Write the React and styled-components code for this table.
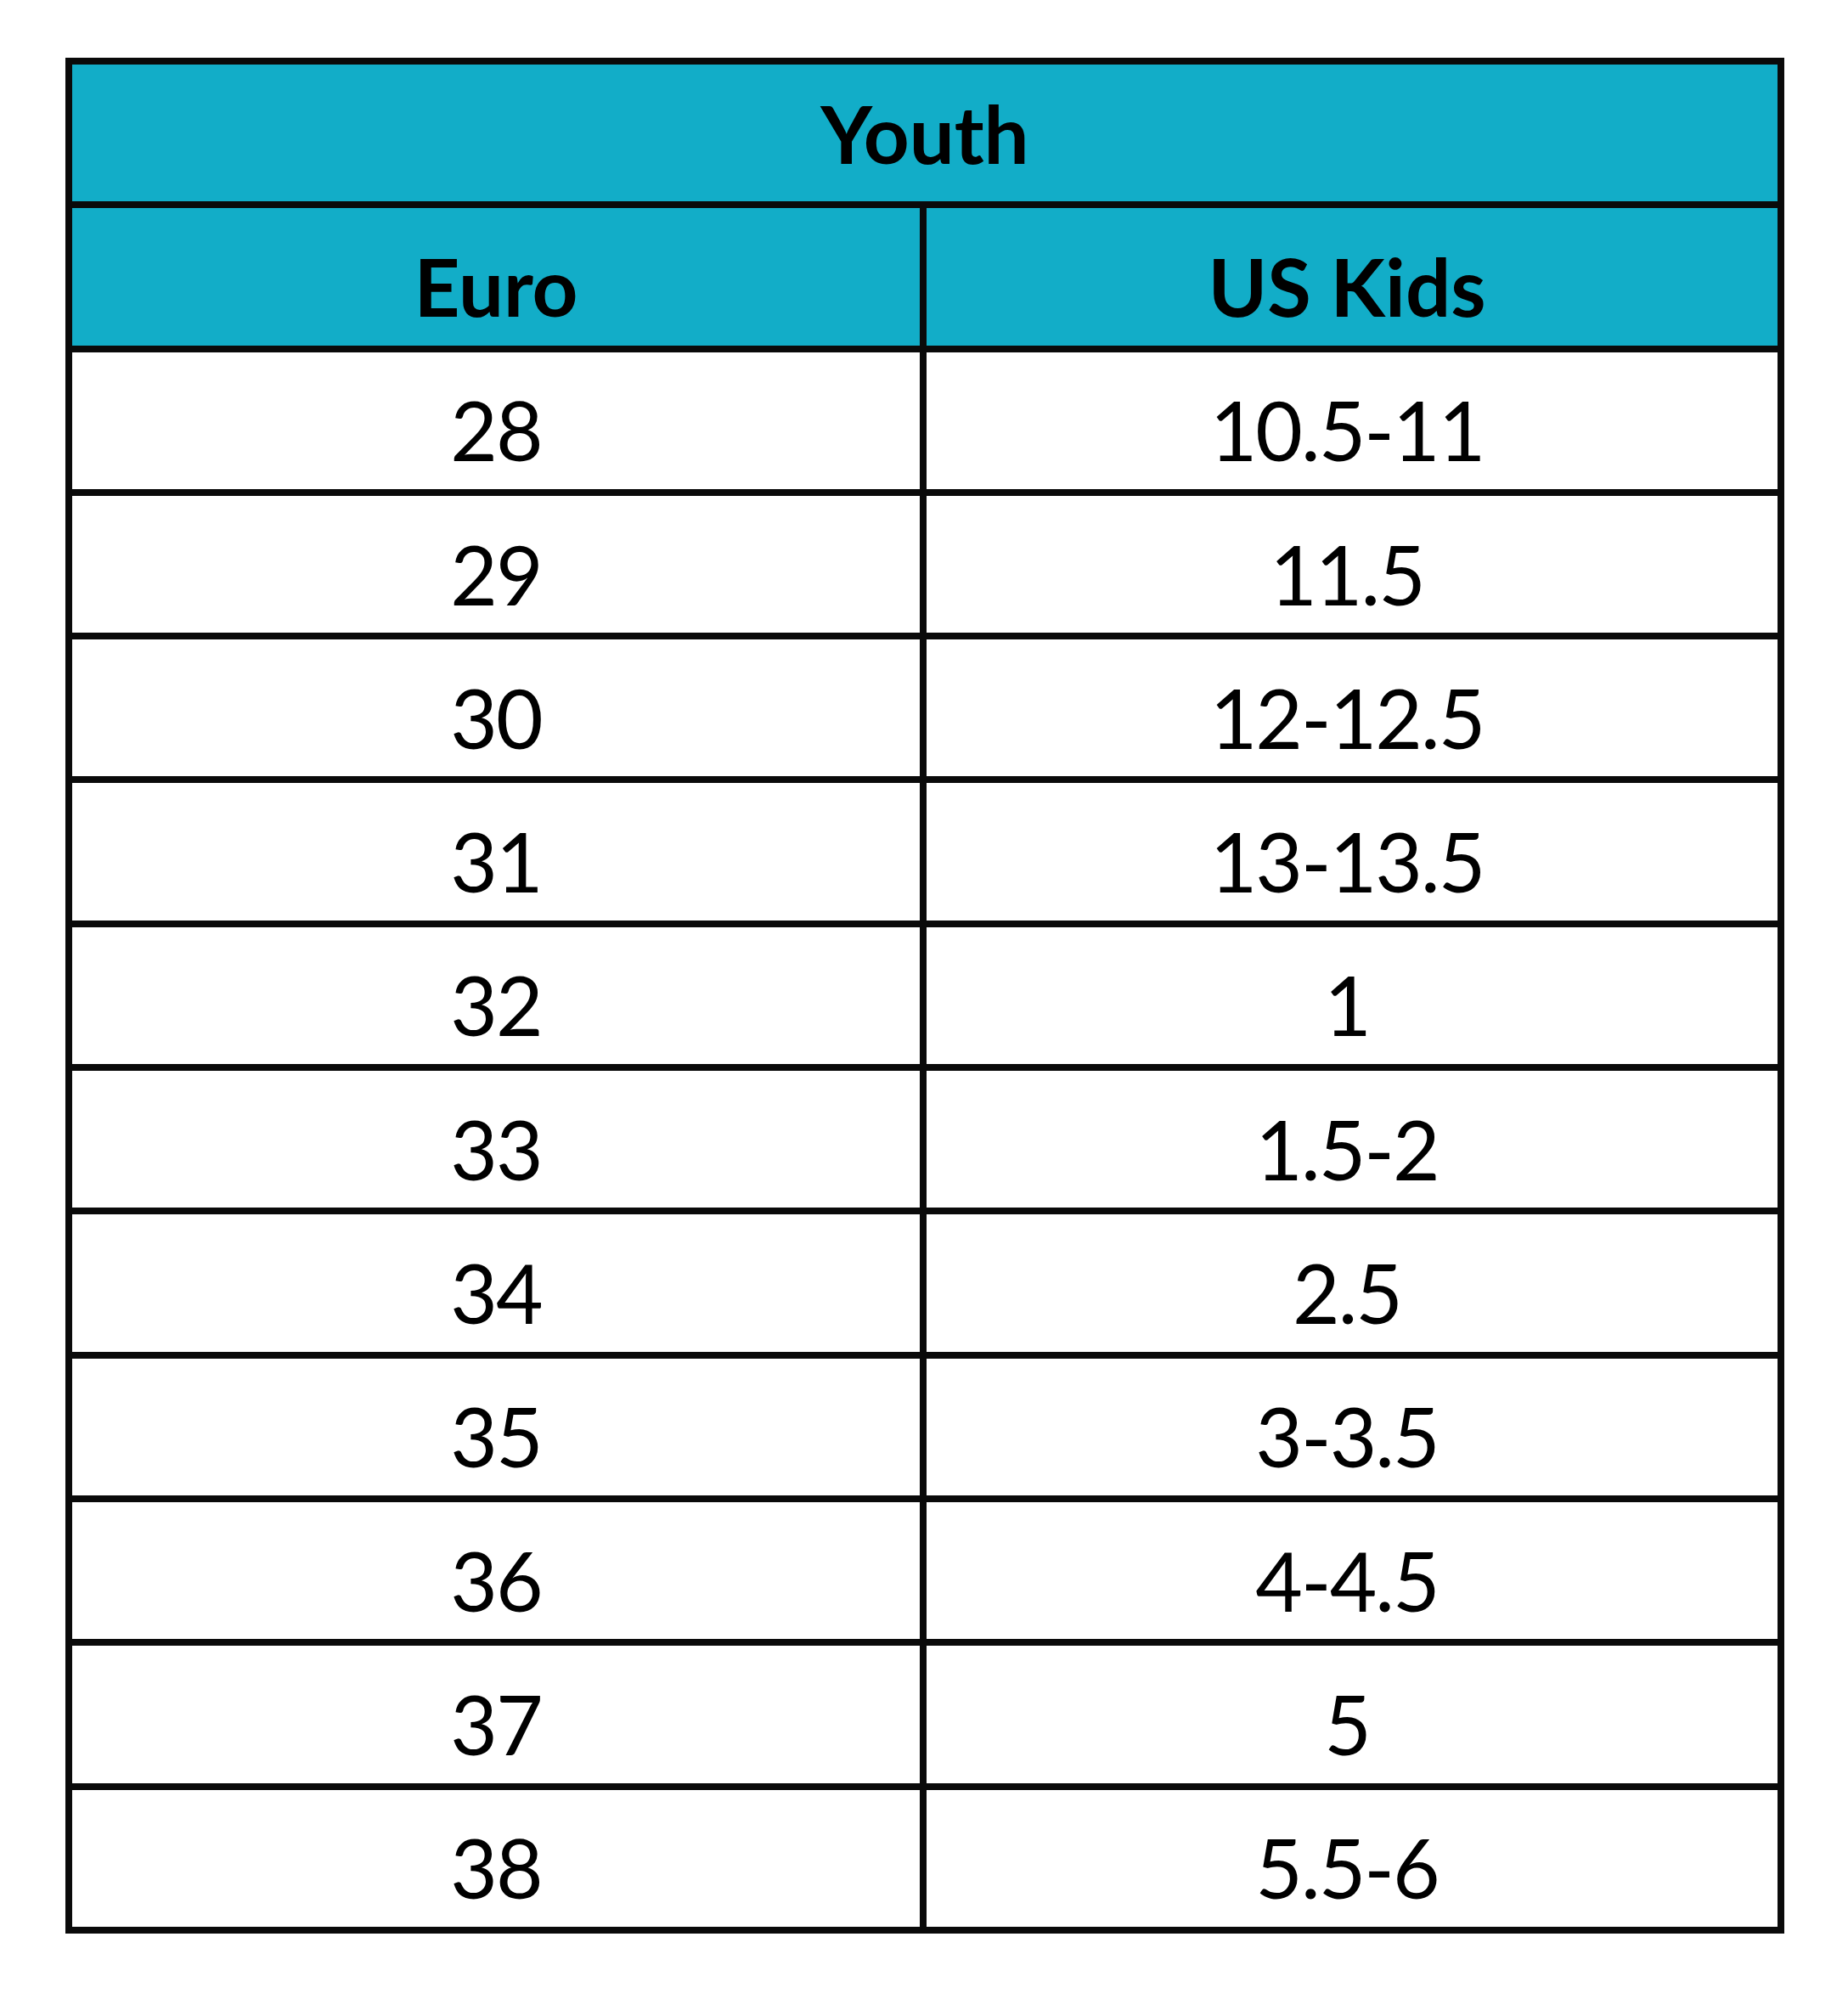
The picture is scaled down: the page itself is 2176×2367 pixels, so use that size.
import React from "react";
import styled, { createGlobalStyle } from "styled-components";

const GlobalStyle = createGlobalStyle`
  html, body {
    margin: 0;
    padding: 0;
    background: #ffffff;
  }
  body {
    font-family: Lato, "Open Sans", "Liberation Sans", sans-serif;
    color: #000;
  }
`;

const Page = styled.div`
  width: 2176px;
  min-height: 2367px;
  padding: 68px 0 0 77px;
  box-sizing: border-box;
  background: #fff;
`;

const Table = styled.div`
  display: grid;
  width: 2024px;
  box-sizing: border-box;
  grid-template-columns: 998px 1002px;
  grid-auto-rows: 161.3px;
  gap: 8px;
  padding: 8px;
  background: #0a0a0a;
`;

const Cell = styled.div`
  display: flex;
  align-items: center;
  justify-content: center;
  box-sizing: border-box;
  background: ${(p) => (p.$head ? "#12adc8" : "#ffffff")};
  color: #000;
  font-size: ${(p) => (p.$head ? "94px" : "96px")};
  font-weight: ${(p) => (p.$head ? 700 : 400)};
  padding-top: ${(p) => (p.$offset ? "22px" : "0")};
  padding-right: ${(p) => (p.$right ? "12px" : "0")};
  line-height: 1;
  white-space: nowrap;
  letter-spacing: ${(p) => (p.$head ? "0px" : "-2px")};
`;

const TitleCell = styled(Cell)`
  grid-column: 1 / span 2;
`;

const rows = [
  ["28", "10.5-11"],
  ["29", "11.5"],
  ["30", "12-12.5"],
  ["31", "13-13.5"],
  ["32", "1"],
  ["33", "1.5-2"],
  ["34", "2.5"],
  ["35", "3-3.5"],
  ["36", "4-4.5"],
  ["37", "5"],
  ["38", "5.5-6"],
];

export default function App() {
  return (
    <Page>
      <GlobalStyle />
      <Table>
        <TitleCell $head>Youth</TitleCell>
        <Cell $head $offset>Euro</Cell>
        <Cell $head $offset $right>US Kids</Cell>
        {rows.map(([eu, us]) => (
          <React.Fragment key={eu}>
            <Cell $offset>{eu}</Cell>
            <Cell $offset $right>{us}</Cell>
          </React.Fragment>
        ))}
      </Table>
    </Page>
  );
}
